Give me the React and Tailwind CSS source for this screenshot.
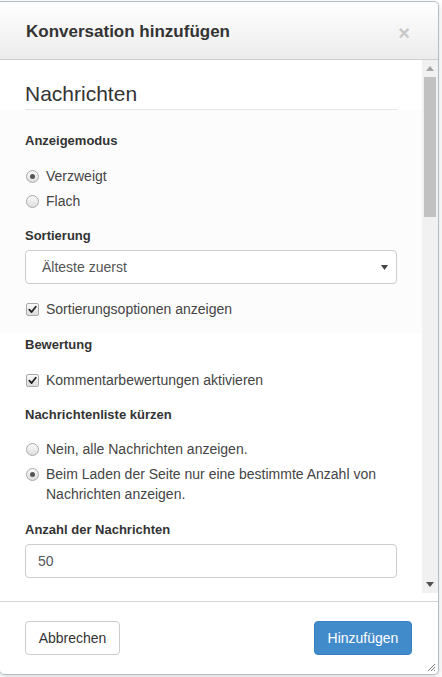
import React from 'react';

const font = { fontFamily: '"Liberation Sans", Arial, sans-serif' };

function Radio({ checked, children }) {
  return (
    <label className="flex items-start gap-[7px] text-[14px] leading-[20px] text-[#444]">
      <span className="mt-[4px] ml-[1px] flex h-[13px] w-[13px] shrink-0 items-center justify-center rounded-full border border-[#a9a9a9] bg-gradient-to-b from-[#fafafa] to-[#dedede]">
        {checked && <span className="h-[5px] w-[5px] rounded-full bg-[#555]" />}
      </span>
      <span>{children}</span>
    </label>
  );
}

function Checkbox({ checked, children }) {
  return (
    <label className="flex items-start gap-[7px] text-[14px] leading-[20px] text-[#444]">
      <span className="mt-[4px] ml-[1px] flex h-[13px] w-[13px] shrink-0 items-center justify-center rounded-[2px] border border-[#a9a9a9] bg-gradient-to-b from-[#fafafa] to-[#dcdcdc]">
        {checked && (
          <svg width="9" height="9" viewBox="0 0 10 10">
            <path d="M1.5 5.2 L4 7.8 L8.6 2" fill="none" stroke="#222" strokeWidth="2" strokeLinecap="round" strokeLinejoin="round" />
          </svg>
        )}
      </span>
      <span>{children}</span>
    </label>
  );
}

function Label({ children, className = '' }) {
  return <div className={`text-[13px] font-bold leading-[18px] text-[#333] ${className}`}>{children}</div>;
}

function FakeScrollbar() {
  return (
    <div className="flex w-[16px] shrink-0 flex-col bg-[#f1f1f1]">
      <div className="flex h-[17px] items-center justify-center">
        <svg width="8" height="5" viewBox="0 0 8 5"><path d="M0 5 L4 0 L8 5 Z" fill="#a3a3a3" /></svg>
      </div>
      <div className="mx-[2px] h-[140px] bg-[#c1c1c1]" />
      <div className="flex-1" />
      <div className="flex h-[17px] items-center justify-center">
        <svg width="8" height="5" viewBox="0 0 8 5"><path d="M0 0 L8 0 L4 5 Z" fill="#505050" /></svg>
      </div>
    </div>
  );
}

export default function App() {
  return (
    <div className="h-[677px] w-[442px] overflow-hidden bg-white pt-[1px]" style={font}>
      <div className="ml-[-1px] flex w-[440px] flex-col rounded-tr-[5px] rounded-b-[5px] border border-[#b5bcc4] bg-white shadow-[0_2px_6px_rgba(0,0,0,0.15)]">
        {/* Header */}
        <div className="flex h-[58px] items-start justify-between rounded-tr-[5px] border-b border-[#cfcfcf] bg-gradient-to-b from-[#ffffff] to-[#ececec] pl-[26px] pr-[28px] pt-[19px]">
          <h1 className="text-[17px] font-bold leading-[22px] text-[#333]">Konversation hinzufügen</h1>
          <span className="text-[20px] font-bold leading-[24px] text-[#c8c8c8]">×</span>
        </div>

        {/* Body */}
        <div className="flex h-[533px]">
          <div className="w-[422px] overflow-hidden">
            <div className="px-[25px] pt-[22px]">
              <h2 className="border-b border-[#e5e5e5] pb-[3px] text-[21px] leading-[24px] text-[#333]">Nachrichten</h2>
            </div>

            <div className="bg-[#fcfcfc] px-[25px] pt-[22px] pb-[14px]">
              <Label>Anzeigemodus</Label>
              <div className="mt-[16px] flex flex-col gap-[5px]">
                <Radio checked>Verzweigt</Radio>
                <Radio>Flach</Radio>
              </div>

              <Label className="mt-[16px]">Sortierung</Label>
              <div className="mt-[5px] flex h-[34px] items-center justify-between rounded-[4px] border border-[#ccc] bg-white pl-[16px] pr-[8px] text-[14px] text-[#555]">
                <span>Älteste zuerst</span>
                <svg width="7" height="5" viewBox="0 0 7 5"><path d="M0 0 L7 0 L3.5 5 Z" fill="#444" /></svg>
              </div>

              <div className="mt-[15px]">
                <Checkbox checked>Sortierungsoptionen anzeigen</Checkbox>
              </div>
            </div>

            <div className="px-[25px]">
              <Label className="mt-[3px]">Bewertung</Label>
              <div className="mt-[16px]">
                <Checkbox checked>Kommentarbewertungen aktivieren</Checkbox>
              </div>

              <Label className="mt-[16px]">Nachrichtenliste kürzen</Label>
              <div className="mt-[15px] flex flex-col gap-[5px]">
                <Radio>Nein, alle Nachrichten anzeigen.</Radio>
                <Radio checked>Beim Laden der Seite nur eine bestimmte Anzahl von Nachrichten anzeigen.</Radio>
              </div>

              <Label className="mt-[17px]">Anzahl der Nachrichten</Label>
              <div className="mt-[5px] flex h-[34px] items-center rounded-[4px] border border-[#ccc] bg-white px-[12px] text-[14px] text-[#555]">
                50
              </div>
            </div>
          </div>
          <FakeScrollbar />
        </div>
        <div className="h-[8px]" />

        {/* Footer */}
        <div className="relative flex h-[73px] items-start justify-between border-t border-[#d4d4d4] px-[25px] pt-[19px]">
          <button className="h-[34px] w-[95px] rounded-[4px] border border-[#ccc] bg-white text-[14px] text-[#333]">Abbrechen</button>
          <button className="mr-[1px] h-[34px] w-[98px] rounded-[4px] border border-[#3a7fc1] bg-[#428bca] text-[14px] text-white">Hinzufügen</button>
          <svg className="absolute bottom-[2px] right-[2px]" width="10" height="10" viewBox="0 0 10 10">
            <path d="M9 2 L2 9 M9 5 L5 9 M9 8 L8 9" stroke="#777" strokeWidth="1" />
          </svg>
        </div>
      </div>
    </div>
  );
}
